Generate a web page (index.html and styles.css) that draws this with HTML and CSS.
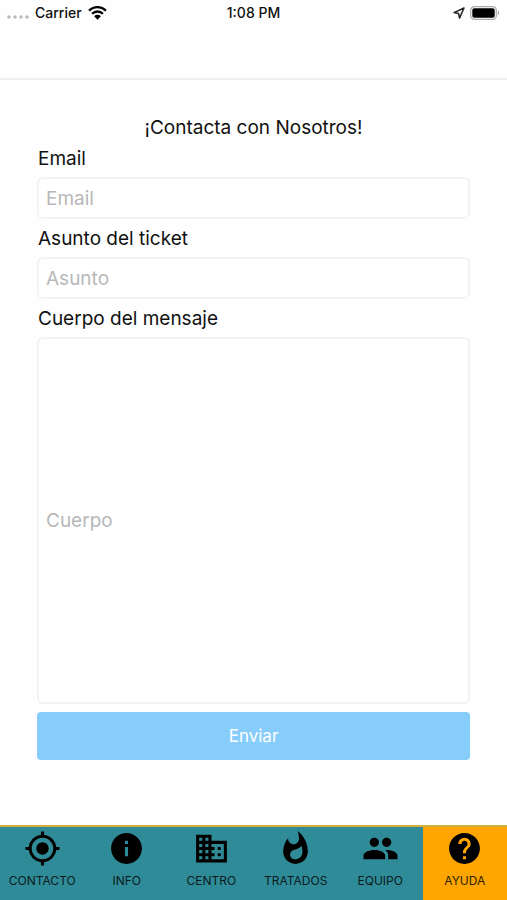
FILE: index.html
```html
<!DOCTYPE html>
<html lang="es">
<head>
  <meta charset="utf-8">
  <meta name="viewport" content="width=device-width, initial-scale=1">
  <title>Contacto</title>
  <link rel="stylesheet" href="styles.css">
</head>
<body>
  <div class="status">
    <div class="status-side">
      <svg class="dots" viewBox="0 0 22 4" aria-hidden="true"><circle cx="2" cy="2" r="1.8"/><circle cx="8" cy="2" r="1.8"/><circle cx="14" cy="2" r="1.8"/><circle cx="20" cy="2" r="1.8"/></svg>
      <span>Carrier</span>
      <svg class="wifi" viewBox="0 0 18 14" aria-hidden="true">
        <path d="M1 5.2a11.4 11.4 0 0 1 16 0M3.9 8.2a7.2 7.2 0 0 1 10.2 0" fill="none" stroke="#000" stroke-width="2.3"/>
        <path d="M9 13.8 5.8 10.5a4.6 4.6 0 0 1 6.4 0z"/>
      </svg>
    </div>
    <span>1:08 PM</span>
    <div class="status-side status-end">
      <svg class="arrow" viewBox="0 0 12 12" aria-hidden="true"><path d="M11 1 1 5.600l4.600.900.900 4.600z" fill="none" stroke="#222" stroke-width="1.5" stroke-linejoin="round"/></svg>
      <svg class="battery" viewBox="0 0 30 14" aria-hidden="true">
        <rect x=".7" y=".7" width="25.6" height="12.6" rx="3.6" fill="none" stroke="#aaa" stroke-width="1.2"/>
        <rect x="2.3" y="2.3" width="22.4" height="9.4" rx="2"/>
        <path d="M27.8 4.8c1.8.6 1.8 3.8 0 4.4z" fill="#aaa"/>
      </svg>
    </div>
  </div>
  <header class="header"></header>
  <main class="main">
    <form class="form">
      <h1 class="title">¡Contacta con Nosotros!</h1>
      <label class="label" for="email">Email</label>
      <input class="field" id="email" type="email" placeholder="Email">
      <label class="label" for="subject">Asunto del ticket</label>
      <input class="field" id="subject" type="text" placeholder="Asunto">
      <label class="label" for="body">Cuerpo del mensaje</label>
      <textarea class="field field-body" id="body" rows="1" placeholder="Cuerpo"></textarea>
      <button class="submit" type="button">Enviar</button>
    </form>
  </main>
  <nav class="tabs">
    <a class="tab" href="#contacto">
      <svg viewBox="0 0 24 24" aria-hidden="true"><path d="M12 8c-2.210 0-4 1.790-4 4s1.790 4 4 4 4-1.790 4-4-1.790-4-4-4zm8.940 3A8.994 8.994 0 0 0 13 3.060V1h-2v2.060A8.994 8.994 0 0 0 3.060 11H1v2h2.060A8.994 8.994 0 0 0 11 20.940V23h2v-2.060A8.994 8.994 0 0 0 20.940 13H23v-2h-2.060zM12 19c-3.870 0-7-3.130-7-7s3.130-7 7-7 7 3.130 7 7-3.130 7-7 7z"/></svg>
      <span>CONTACTO</span>
    </a>
    <a class="tab" href="#info">
      <svg viewBox="0 0 24 24" aria-hidden="true"><path d="M12 2C6.480 2 2 6.480 2 12s4.480 10 10 10 10-4.480 10-10S17.520 2 12 2zm1 15h-2v-6h2v6zm0-8h-2V7h2v2z"/></svg>
      <span>INFO</span>
    </a>
    <a class="tab" href="#centro">
      <svg viewBox="0 0 24 24" aria-hidden="true"><path d="M12 7V3H2v18h20V7H12zM6 19H4v-2h2v2zm0-4H4v-2h2v2zm0-4H4V9h2v2zm0-4H4V5h2v2zm4 12H8v-2h2v2zm0-4H8v-2h2v2zm0-4H8V9h2v2zm0-4H8V5h2v2zm10 12h-8v-2h2v-2h-2v-2h2v-2h-2V9h8v10zm-2-8h-2v2h2v-2zm0 4h-2v2h2v-2z"/></svg>
      <span>CENTRO</span>
    </a>
    <a class="tab" href="#tratados">
      <svg viewBox="0 0 24 24" aria-hidden="true"><path d="M13.500.670s.740 2.650.740 4.800c0 2.060-1.350 3.730-3.410 3.730-2.070 0-3.630-1.670-3.630-3.730l.030-.360C5.210 7.510 4 10.620 4 14c0 4.420 3.580 8 8 8s8-3.580 8-8C20 8.610 17.410 3.800 13.500.670zM11.710 19c-1.780 0-3.220-1.400-3.220-3.140 0-1.620 1.050-2.760 2.810-3.120 1.770-.360 3.600-1.210 4.620-2.580.390 1.290.590 2.650.590 4.040 0 2.650-2.150 4.800-4.800 4.800z"/></svg>
      <span>TRATADOS</span>
    </a>
    <a class="tab" href="#equipo">
      <svg viewBox="0 0 24 24" aria-hidden="true"><path d="M16 11c1.660 0 2.990-1.340 2.990-3S17.660 5 16 5c-1.660 0-3 1.340-3 3s1.340 3 3 3zm-8 0c1.660 0 2.990-1.340 2.990-3S9.660 5 8 5C6.340 5 5 6.340 5 8s1.340 3 3 3zm0 2c-2.330 0-7 1.170-7 3.500V19h14v-2.500c0-2.330-4.670-3.500-7-3.500zm8 0c-.290 0-.620.020-.970.050 1.160.840 1.970 1.970 1.970 3.450V19h6v-2.500c0-2.330-4.670-3.500-7-3.500z"/></svg>
      <span>EQUIPO</span>
    </a>
    <a class="tab tab-active" href="#ayuda" aria-current="page">
      <svg viewBox="0 0 24 24" aria-hidden="true"><path d="M12 2C6.480 2 2 6.480 2 12s4.480 10 10 10 10-4.480 10-10S17.520 2 12 2zm1 17h-2v-2h2v2zm2.070-7.750l-.900.920C13.450 12.900 13 13.500 13 15h-2v-.500c0-1.100.450-2.100 1.170-2.830l1.240-1.260c.370-.360.590-.860.590-1.410 0-1.100-.900-2-2-2s-2 .900-2 2H8c0-2.210 1.790-4 4-4s4 1.790 4 4c0 .880-.360 1.680-.930 2.250z"/></svg>
      <span>AYUDA</span>
    </a>
  </nav>
</body>
</html>
```
FILE: styles.css
```css
* {
  box-sizing: border-box;
}

body {
  margin: 0;
  min-height: 100vh;
  display: flex;
  flex-direction: column;
  background: #fefefe;
  color: #111;
  font-family: Inter, "Liberation Sans", sans-serif;
}

.status {
  display: flex;
  align-items: center;
  height: 25px;
  padding: 0 7px;
  font-size: 14px;
  font-weight: 500;
}

.status-side {
  flex: 1;
  display: flex;
  align-items: center;
  gap: 6px;
}

.status-end {
  justify-content: flex-end;
  gap: 5px;
}

.dots {
  width: 22px;
  height: 4px;
  margin-top: 8px;
  fill: #bbb;
}

.wifi {
  width: 19px;
  height: 15px;
}

.arrow {
  width: 12px;
  height: 12px;
}

.battery {
  width: 30px;
  height: 14px;
}

.header {
  height: 55px;
  border-bottom: 2px solid #eee;
}

.main {
  flex: 1;
  padding: 37px 37px 0;
}

.form {
  display: flex;
  flex-direction: column;
}

.title {
  margin: 0;
  font-size: 19px;
  font-weight: 400;
  line-height: 22px;
  text-align: center;
}

.label {
  padding: 2px 1px 0;
  font-size: 19px;
  line-height: 36px;
}

.field {
  width: 100%;
  height: 42px;
  padding: 0 7px;
  border: 2px solid #f3f3f3;
  border-radius: 6px;
  background: #fff;
  color: #111;
  font: inherit;
  font-size: 19px;
  line-height: 24px;
}

.field::placeholder {
  color: #b8b8b8;
}

.field-body {
  height: auto;
  padding: 170px 7px 169px;
  resize: none;
  overflow: hidden;
}

.submit {
  height: 48px;
  margin-top: 8px;
  border: 0;
  border-radius: 4px;
  background: #87cdfb;
  color: #fff;
  font: inherit;
  font-size: 17px;
}

.tabs {
  display: grid;
  grid-template-columns: repeat(6, 1fr);
  border-top: 2px solid #d0ae42;
  background: #2f8b98;
}

.tab {
  display: flex;
  flex-direction: column;
  align-items: center;
  gap: 6px;
  height: 73px;
  padding-top: 3px;
  color: #0b1a1d;
  font-size: 12px;
  line-height: 16px;
  text-decoration: none;
}

.tab svg {
  width: 37px;
  height: 37px;
  fill: #000;
}

.tab-active {
  background: #ffa500;
  color: #2b1d00;
}
```
